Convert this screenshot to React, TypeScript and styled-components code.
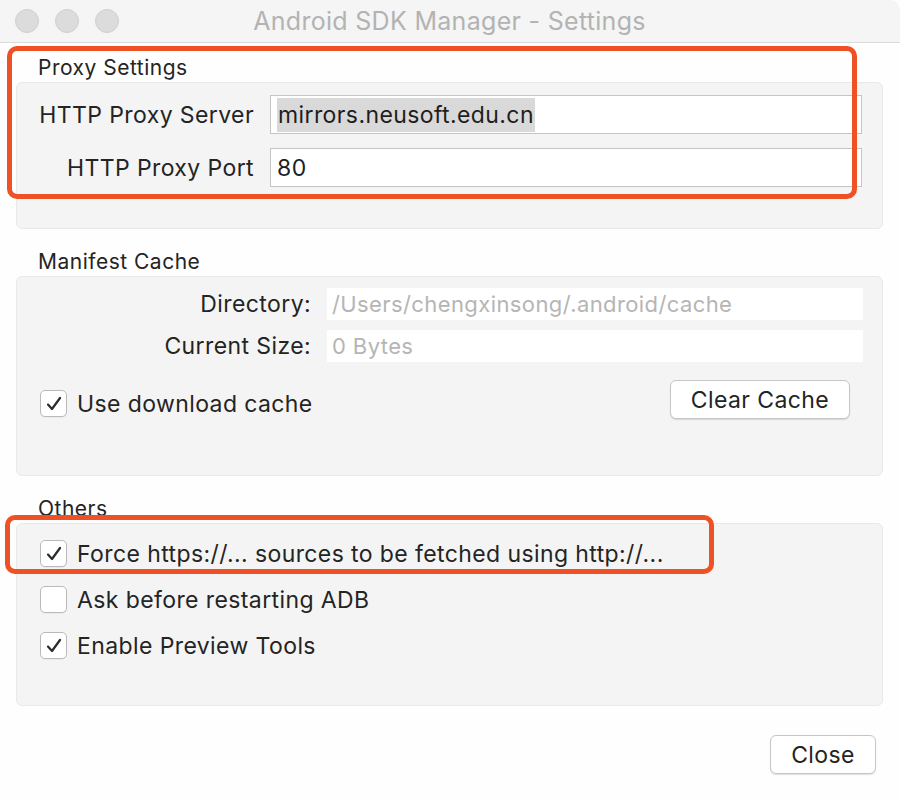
import React, { useState } from 'react';
import styled, { createGlobalStyle } from 'styled-components';

const GlobalStyle = createGlobalStyle`
  html, body {
    margin: 0;
    padding: 0;
    background: #ffffff;
  }
  body {
    font-family: Inter, "Liberation Sans", Arial, sans-serif;
    color: #242424;
  }
`;

const Window = styled.div`
  position: relative;
  width: 900px;
  height: 800px;
  background: #fefefe;
  overflow: hidden;
`;

const TitleBar = styled.div`
  height: 42px;
  background: #f5f5f5;
  border-bottom: 1px solid #dadada;
  border-top-right-radius: 10px;
  display: flex;
  align-items: center;
`;

const Lights = styled.div`
  display: flex;
  gap: 16px;
  padding-left: 15px;
`;

const Light = styled.span`
  width: 24px;
  height: 24px;
  border-radius: 50%;
  background: #dcdcdc;
  border: 1px solid #d0d0d0;
  box-sizing: border-box;
`;

const Title = styled.div`
  flex: 1;
  text-align: center;
  font-size: 25px;
  letter-spacing: 0.3px;
  color: #b3b3b3;
  margin-right: 120px;
`;

const Body = styled.div`
  padding: 13px 17px 0 16px;
`;

const GroupTitle = styled.div`
  font-size: 21px;
  line-height: 24px;
  letter-spacing: 0.5px;
  padding-left: 22px;
  margin-bottom: 2px;
`;

const Panel = styled.div<{ $height: number; $padTop: number }>`
  box-sizing: border-box;
  height: ${(p) => p.$height}px;
  padding-top: ${(p) => p.$padTop}px;
  background: #f4f4f4;
  border: 1px solid #e9e9e9;
  border-radius: 6px;
  margin-bottom: 21px;
`;

const FormGrid = styled.div<{ $labelWidth: number; $rowGap: number; $right: number }>`
  display: grid;
  grid-template-columns: ${(p) => p.$labelWidth}px 1fr;
  column-gap: 16px;
  row-gap: ${(p) => p.$rowGap}px;
  padding-right: ${(p) => p.$right}px;
  align-items: center;
`;

const Label = styled.div`
  text-align: right;
  font-size: 23px;
  letter-spacing: 0.4px;
`;

const TextField = styled.div`
  box-sizing: border-box;
  height: 39px;
  background: #ffffff;
  border: 1px solid #c4c4c4;
  display: flex;
  align-items: center;
  padding-left: 6px;
  font-size: 23px;
  letter-spacing: 0.4px;
  color: #1e1e1e;
`;

const Selected = styled.span`
  background: #d9d9d9;
  padding: 3px 1px;
`;

const ReadOnlyField = styled.div`
  box-sizing: border-box;
  height: 32px;
  background: #ffffff;
  display: flex;
  align-items: center;
  padding-left: 5px;
  font-size: 22px;
  letter-spacing: 0.4px;
  color: #b5b5b5;
`;

const CacheRow = styled.div`
  display: flex;
  align-items: flex-start;
  justify-content: space-between;
  padding: 0 32px 0 23px;
  margin-top: 18px;
`;

const CacheCheck = styled.div`
  padding-top: 10px;
`;

const CheckList = styled.div`
  display: flex;
  flex-direction: column;
  gap: 19px;
  padding-left: 23px;
`;

const CheckRow = styled.label`
  display: flex;
  align-items: center;
  gap: 10px;
  font-size: 23px;
  letter-spacing: 0.4px;
  height: 27px;
  cursor: default;
`;

const Box = styled.span`
  box-sizing: border-box;
  width: 27px;
  height: 27px;
  border: 1px solid #bababa;
  border-radius: 5px;
  background: #ffffff;
  display: flex;
  align-items: center;
  justify-content: center;
  box-shadow: 0 1px 0 rgba(0, 0, 0, 0.04);
`;

const Button = styled.button<{ $width: number }>`
  box-sizing: border-box;
  width: ${(p) => p.$width}px;
  height: 39px;
  background: #ffffff;
  border: 1px solid #c6c6c6;
  border-radius: 6px;
  box-shadow: 0 1px 1px rgba(0, 0, 0, 0.12);
  font-family: inherit;
  font-size: 23px;
  letter-spacing: 0.4px;
  color: #242424;
  padding: 0;
`;

const Footer = styled.div`
  display: flex;
  justify-content: flex-end;
  padding: 8px 7px 0 0;
`;

const Highlight = styled.div<{ $x: number; $y: number; $w: number; $h: number }>`
  position: absolute;
  left: ${(p) => p.$x}px;
  top: ${(p) => p.$y}px;
  width: ${(p) => p.$w}px;
  height: ${(p) => p.$h}px;
  box-sizing: border-box;
  border: 5px solid #ee5125;
  border-radius: 10px;
  pointer-events: none;
`;

const Tick = () => (
  <svg width="18" height="18" viewBox="0 0 18 18">
    <path d="M3 9.6 L7 14 L15 3" fill="none" stroke="#2b2b2b" strokeWidth="2.2" strokeLinecap="round" strokeLinejoin="round" />
  </svg>
);

const Check: React.FC<{ label: string; initial: boolean }> = ({ label, initial }) => {
  const [on, setOn] = useState(initial);
  return (
    <CheckRow onClick={() => setOn(!on)}>
      <Box>{on && <Tick />}</Box>
      {label}
    </CheckRow>
  );
};

export default function App() {
  return (
    <Window>
      <GlobalStyle />
      <TitleBar>
        <Lights>
          <Light />
          <Light />
          <Light />
        </Lights>
        <Title>Android SDK Manager - Settings</Title>
      </TitleBar>
      <Body>
        <GroupTitle>Proxy Settings</GroupTitle>
        <Panel $height={147} $padTop={12}>
          <FormGrid $labelWidth={237} $rowGap={14} $right={20}>
            <Label>HTTP Proxy Server</Label>
            <TextField>
              <Selected>mirrors.neusoft.edu.cn</Selected>
            </TextField>
            <Label>HTTP Proxy Port</Label>
            <TextField>80</TextField>
          </FormGrid>
        </Panel>

        <GroupTitle>Manifest Cache</GroupTitle>
        <Panel $height={200} $padTop={11}>
          <FormGrid $labelWidth={294} $rowGap={10} $right={19}>
            <Label>Directory:</Label>
            <ReadOnlyField>/Users/chengxinsong/.android/cache</ReadOnlyField>
            <Label>Current Size:</Label>
            <ReadOnlyField>0 Bytes</ReadOnlyField>
          </FormGrid>
          <CacheRow>
            <CacheCheck>
              <Check label="Use download cache" initial={true} />
            </CacheCheck>
            <Button $width={180}>Clear Cache</Button>
          </CacheRow>
        </Panel>

        <GroupTitle>Others</GroupTitle>
        <Panel $height={183} $padTop={16}>
          <CheckList>
            <Check label="Force https://... sources to be fetched using http://..." initial={true} />
            <Check label="Ask before restarting ADB" initial={false} />
            <Check label="Enable Preview Tools" initial={true} />
          </CheckList>
        </Panel>

        <Footer>
          <Button $width={106}>Close</Button>
        </Footer>
      </Body>

      <Highlight $x={7} $y={46} $w={850} $h={153} />
      <Highlight $x={5} $y={515} $w={709} $h={59} />
    </Window>
  );
}
